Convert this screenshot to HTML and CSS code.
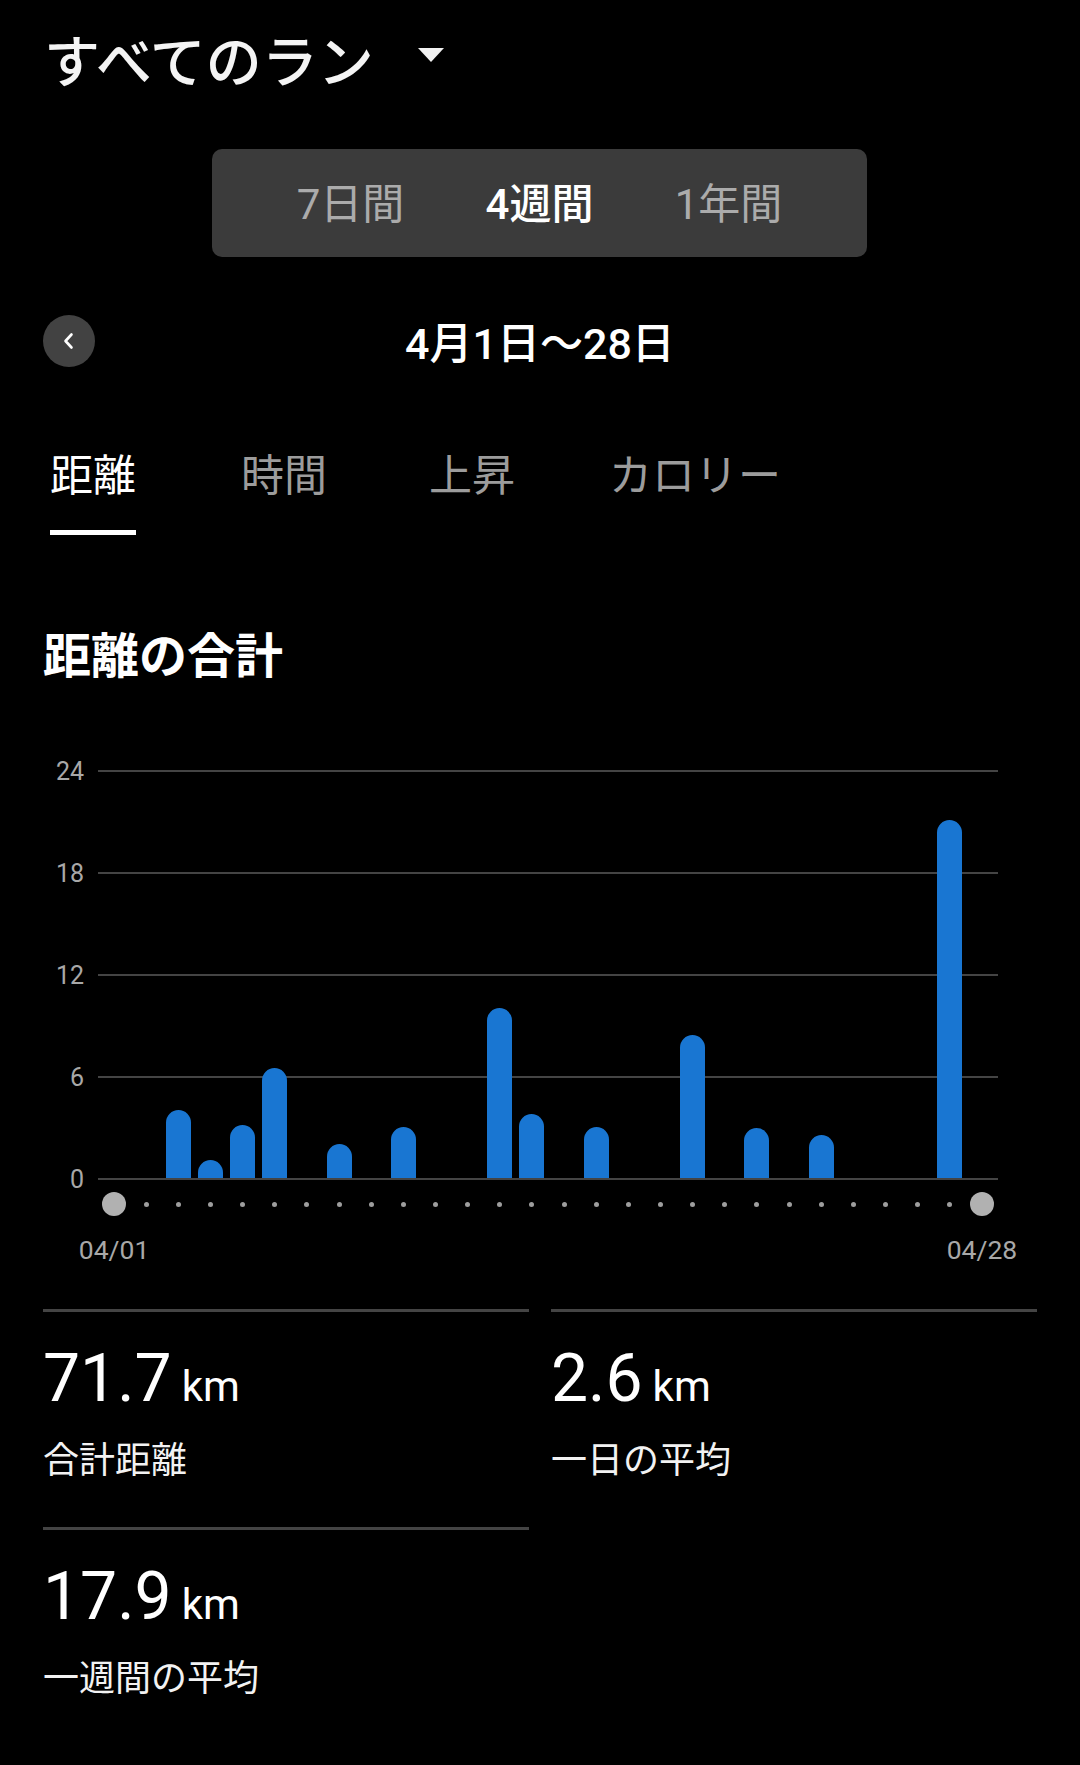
FILE: index.html
```html
<!DOCTYPE html>
<html lang="ja">
<head>
<meta charset="utf-8">
<title>すべてのラン</title>
<link rel="stylesheet" href="styles.css">
</head>
<body>
<div class="header">
  <div class="title">すべてのラン</div>
  <svg class="caret" width="26" height="14" viewBox="0 0 26 14"><polygon points="0,0 26,0 13,14" fill="#f2f2f2"/></svg>
</div>

<div class="segment">
  <div class="seg">7日間</div>
  <div class="seg active">4週間</div>
  <div class="seg">1年間</div>
</div>

<div class="daterow">
  <div class="back">
    <svg width="20" height="20" viewBox="0 0 20 20"><polyline points="12.5,3.5 6.5,10 12.5,16.5" fill="none" stroke="#fff" stroke-width="2.6" stroke-linecap="round" stroke-linejoin="round"/></svg>
  </div>
  <div class="date">4月1日〜28日</div>
  <div></div>
</div>

<div class="tabs">
  <div class="tab active">距離</div>
  <div class="tab">時間</div>
  <div class="tab">上昇</div>
  <div class="tab">カロリー</div>
</div>

<div class="section-title">距離の合計</div>

<div class="chart">
  <div class="yaxis">
    <div class="yl">24</div>
    <div class="yl">18</div>
    <div class="yl">12</div>
    <div class="yl">6</div>
    <div class="yl">0</div>
  </div>
  <div class="plot">
    <div class="slot"></div>
    <div class="slot"></div>
    <div class="slot"><div class="bar" style="height:68px"></div></div>
    <div class="slot"><div class="bar" style="height:18px"></div></div>
    <div class="slot"><div class="bar" style="height:53px"></div></div>
    <div class="slot"><div class="bar" style="height:110px"></div></div>
    <div class="slot"></div>
    <div class="slot"><div class="bar" style="height:34px"></div></div>
    <div class="slot"></div>
    <div class="slot"><div class="bar" style="height:51px"></div></div>
    <div class="slot"></div>
    <div class="slot"></div>
    <div class="slot"><div class="bar" style="height:170px"></div></div>
    <div class="slot"><div class="bar" style="height:64px"></div></div>
    <div class="slot"></div>
    <div class="slot"><div class="bar" style="height:51px"></div></div>
    <div class="slot"></div>
    <div class="slot"></div>
    <div class="slot"><div class="bar" style="height:143px"></div></div>
    <div class="slot"></div>
    <div class="slot"><div class="bar" style="height:50px"></div></div>
    <div class="slot"></div>
    <div class="slot"><div class="bar" style="height:43px"></div></div>
    <div class="slot"></div>
    <div class="slot"></div>
    <div class="slot"></div>
    <div class="slot"><div class="bar" style="height:358px"></div></div>
    <div class="slot"></div>
  </div>
  <div></div>
  <div class="dots">
    <div class="dot big"></div>
    <div class="dot"></div><div class="dot"></div><div class="dot"></div><div class="dot"></div>
    <div class="dot"></div><div class="dot"></div><div class="dot"></div><div class="dot"></div>
    <div class="dot"></div><div class="dot"></div><div class="dot"></div><div class="dot"></div>
    <div class="dot"></div><div class="dot"></div><div class="dot"></div><div class="dot"></div>
    <div class="dot"></div><div class="dot"></div><div class="dot"></div><div class="dot"></div>
    <div class="dot"></div><div class="dot"></div><div class="dot"></div><div class="dot"></div>
    <div class="dot"></div><div class="dot"></div>
    <div class="dot big"></div>
  </div>
  <div></div>
  <div class="xlabels">
    <div class="xl">04/01</div>
    <div class="xgap"></div>
    <div class="xl">04/28</div>
  </div>
</div>

<div class="stats">
  <div class="stat">
    <div class="value">71.7<span class="unit">km</span></div>
    <div class="label">合計距離</div>
  </div>
  <div class="stat">
    <div class="value">2.6<span class="unit">km</span></div>
    <div class="label">一日の平均</div>
  </div>
  <div class="stat">
    <div class="value">17.9<span class="unit">km</span></div>
    <div class="label">一週間の平均</div>
  </div>
</div>
</body>
</html>
```

FILE: styles.css
```css
html, body {
  margin: 0;
  padding: 0;
  background: #000;
}

body {
  width: 1080px;
  height: 1765px;
  overflow: hidden;
  color: #fff;
  font-family: Roboto, "Noto Sans CJK JP", sans-serif;
}

.header {
  height: 116px;
  display: flex;
  align-items: center;
  padding-left: 44px;
  gap: 44px;
}

.title {
  font-family: "Noto Sans CJK JP", sans-serif;
  font-size: 56px;
  font-weight: 500;
  line-height: 64px;
  color: #f4f4f4;
}

.caret {
  display: block;
  margin-top: -6px;
}

.segment {
  margin: 33px 0 0 212px;
  width: 655px;
  height: 108px;
  background: #3b3b3b;
  border-radius: 10px;
  display: grid;
  grid-template-columns: repeat(3, 189px);
  justify-content: center;
  align-items: center;
}

.seg {
  text-align: center;
  font-size: 42px;
  line-height: 50px;
  padding-top: 4px;
  color: #ababab;
}

.seg.active {
  color: #fff;
  font-weight: 500;
}

.daterow {
  margin-top: 58px;
  height: 52px;
  display: grid;
  grid-template-columns: 1fr auto 1fr;
  align-items: center;
}

.back {
  width: 52px;
  height: 52px;
  margin-left: 43px;
  border-radius: 50%;
  background: #424242;
  display: flex;
  align-items: center;
  justify-content: center;
}

.back svg {
  display: block;
}

.date {
  height: 52px;
  font-size: 43px;
  font-weight: 500;
  line-height: 59px;
  color: #fff;
}

.tabs {
  margin-top: 81px;
  padding-left: 50px;
  display: grid;
  grid-template-columns: 191px 188px 180px auto;
  justify-content: start;
}

.tab {
  justify-self: start;
  font-size: 43px;
  line-height: 50px;
  color: #9c9c9c;
  padding-top: 3px;
  padding-bottom: 29px;
  border-bottom: 5px solid transparent;
}

.tab.active {
  color: #fff;
  border-bottom-color: #fff;
}

.section-title {
  margin: 93px 0 0 43px;
  font-size: 48px;
  font-weight: 700;
  line-height: 58px;
  color: #fff;
}

.chart {
  margin-top: 84px;
  display: grid;
  grid-template-columns: 84px 900px;
  column-gap: 14px;
}

.yaxis {
  height: 410px;
  display: flex;
  flex-direction: column;
  justify-content: space-between;
}

.yl {
  height: 2px;
  display: flex;
  align-items: center;
  justify-content: flex-end;
  font-size: 25px;
  color: #a8a8a8;
}

.plot {
  height: 410px;
  box-sizing: border-box;
  padding-bottom: 2px;
  background-image: linear-gradient(#444 0 2px, transparent 2px);
  background-size: 100% 102px;
  display: grid;
  grid-template-columns: repeat(28, minmax(0, 1fr));
}

.slot {
  display: flex;
  justify-content: center;
  align-items: flex-end;
}

.bar {
  width: 25px;
  background: #1976d2;
  border-radius: 12.5px 12.5px 0 0;
}

.dots {
  margin-top: 12px;
  height: 24px;
  display: grid;
  grid-template-columns: repeat(28, minmax(0, 1fr));
  align-items: center;
}

.dot {
  justify-self: center;
  width: 5px;
  height: 5px;
  border-radius: 50%;
  background: #9e9e9e;
}

.dot.big {
  width: 24px;
  height: 24px;
  background: #b1b1b1;
}

.xlabels {
  margin-top: 19px;
  display: grid;
  grid-template-columns: minmax(0, 1fr) minmax(0, 26fr) minmax(0, 1fr);
}

.xl {
  display: flex;
  justify-content: center;
  white-space: nowrap;
  font-size: 26.5px;
  line-height: 30px;
  color: #a8a8a8;
}

.stats {
  margin-top: 44px;
  padding: 0 43px;
  display: grid;
  grid-template-columns: 1fr 1fr;
  column-gap: 22px;
}

.stat {
  box-sizing: border-box;
  height: 218px;
  border-top: 3px solid #444;
  padding-top: 27px;
}

.value {
  font-size: 66px;
  line-height: 80px;
  color: #fff;
  white-space: nowrap;
}

.unit {
  font-size: 42px;
  margin-left: 10px;
}

.label {
  margin-top: 8px;
  font-family: "Noto Sans CJK JP", sans-serif;
  font-size: 36px;
  line-height: 44px;
  color: #f2f2f2;
}
```
